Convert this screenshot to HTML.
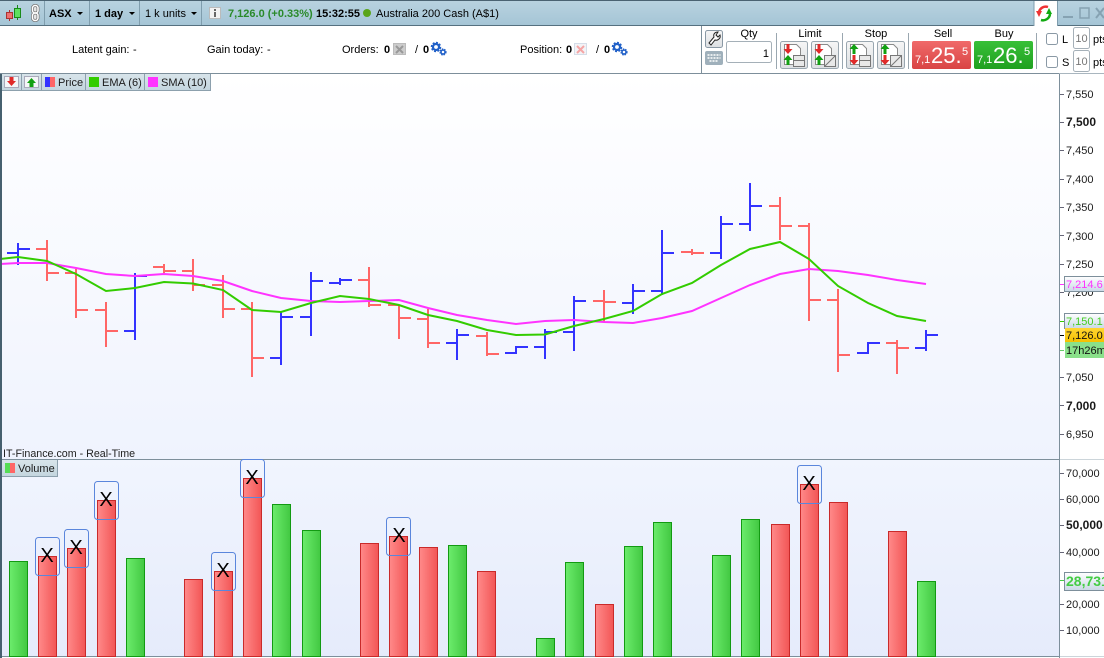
<!DOCTYPE html>
<html><head><meta charset="utf-8"><style>
html,body{margin:0;padding:0;background:#fff;width:1104px;height:658px;overflow:hidden}
svg{display:block;font-family:"Liberation Sans",sans-serif}
</style></head><body>
<svg width="1104" height="658" viewBox="0 0 1104 658" xmlns="http://www.w3.org/2000/svg" font-size="11" fill="#000">
<defs>
<linearGradient id="top" x1="0" y1="0" x2="0" y2="1"><stop offset="0" stop-color="#b9d3e0"/><stop offset="1" stop-color="#a5c5d6"/></linearGradient>
<linearGradient id="bgc" x1="0" y1="0" x2="0" y2="1"><stop offset="0" stop-color="#ffffff"/><stop offset="1" stop-color="#eff3fe"/></linearGradient>
<linearGradient id="bgv" x1="0" y1="0" x2="0" y2="1"><stop offset="0" stop-color="#f1f5fe"/><stop offset="1" stop-color="#e5ebfb"/></linearGradient>
<linearGradient id="rb" x1="0" y1="0" x2="1" y2="0"><stop offset="0" stop-color="#ff8a8a"/><stop offset="1" stop-color="#f25555"/></linearGradient>
<linearGradient id="gb" x1="0" y1="0" x2="1" y2="0"><stop offset="0" stop-color="#6cec6c"/><stop offset="1" stop-color="#42c842"/></linearGradient>
<linearGradient id="sell" x1="0" y1="0" x2="0" y2="1"><stop offset="0" stop-color="#f06a6a"/><stop offset="1" stop-color="#d94444"/></linearGradient>
<linearGradient id="buy" x1="0" y1="0" x2="0" y2="1"><stop offset="0" stop-color="#38c038"/><stop offset="1" stop-color="#20a020"/></linearGradient>
<linearGradient id="btn" x1="0" y1="0" x2="0" y2="1"><stop offset="0" stop-color="#f6f6f6"/><stop offset="1" stop-color="#dcdfe2"/></linearGradient>
<linearGradient id="lab" x1="0" y1="0" x2="0" y2="1"><stop offset="0" stop-color="#ffffff"/><stop offset="1" stop-color="#c9d8e6"/></linearGradient>
<linearGradient id="yel" x1="0" y1="0" x2="0" y2="1"><stop offset="0" stop-color="#ffd633"/><stop offset="1" stop-color="#f5c000"/></linearGradient>
<linearGradient id="leg" x1="0" y1="0" x2="0" y2="1"><stop offset="0" stop-color="#d8e4ea"/><stop offset="1" stop-color="#c4d6df"/></linearGradient>
</defs>

<!-- Chart backgrounds -->
<rect x="0" y="74" width="1059" height="385" fill="url(#bgc)"/>
<rect x="0" y="460" width="1059" height="197" fill="url(#bgv)"/>

<!-- Top bar -->
<rect x="0" y="0" width="1104" height="25" fill="url(#top)"/>
<rect x="0" y="0" width="1104" height="1" fill="#4a6372"/>
<rect x="0" y="25" width="1104" height="1" fill="#55707f"/>
<g fill="#7f9dad"><rect x="44" y="1" width="1" height="24"/><rect x="89" y="1" width="1" height="24"/><rect x="139" y="1" width="1" height="24"/><rect x="201" y="1" width="1" height="24"/></g>
<!-- candle icon -->
<g stroke="#a33" fill="#ee7070"><path d="M9.500 10V21" fill="none"/><rect x="6.500" y="12.500" width="6" height="6"/></g>
<g stroke="#1a8a1a" fill="#5fe05f"><path d="M17.500 5V20" fill="none"/><rect x="14.500" y="8.500" width="6" height="9"/></g>
<!-- chain icon -->
<g fill="#e6e6e6" stroke="#777" stroke-width="3"><rect x="32.500" y="5.500" width="5.500" height="7.500" rx="2.500"/><rect x="32.500" y="13" width="5.500" height="7.500" rx="2.500"/></g>
<g fill="none" stroke="#fff" stroke-width="1.500"><rect x="32.500" y="5.500" width="5.500" height="7.500" rx="2.500"/><rect x="32.500" y="13" width="5.500" height="7.500" rx="2.500"/></g>
<text x="49" y="17" font-weight="bold">ASX</text>
<path d="M77 12h6l-3 3z"/>
<text x="95" y="17" font-weight="bold">1 day</text>
<path d="M129 12h6l-3 3z"/>
<text x="145" y="17">1 k units</text>
<path d="M191 12h6l-3 3z"/>
<rect x="209.500" y="7.500" width="11" height="11" fill="#f2f2f2" stroke="#bbb"/>
<rect x="214" y="9" width="2" height="2" fill="#666"/><rect x="214" y="12" width="2" height="5" fill="#666"/>
<text x="228" y="17" font-weight="bold" fill="#2a8a2a">7,126.0 (+0.33%)</text>
<text x="316" y="17" font-weight="bold">15:32:55</text>
<circle cx="367" cy="13" r="4" fill="#5aa51a"/>
<text x="376" y="17">Australia 200 Cash (A$1)</text>
<!-- tab + window controls -->
<rect x="1034" y="1" width="24" height="25" fill="#fff"/>
<path d="M1034 1V26M1057.500 1V26" stroke="#7f9dad"/>
<path d="M1048 7a7 7 0 0 0-9 5" fill="none" stroke="#e33" stroke-width="2.500"/><path d="M1036 11l6 0-3 6z" fill="#e33"/>
<path d="M1041 20a7 7 0 0 0 9-6" fill="none" stroke="#1a1" stroke-width="2.500"/><path d="M1046 14l6 0-3-6z" fill="#1a1"/>
<rect x="1063" y="16" width="10" height="2" fill="#86a2b2"/>
<rect x="1080" y="8" width="9" height="10" fill="none" stroke="#86a2b2" stroke-width="1.500"/>
<path d="M1096 8l8 10M1104 8l-8 10" stroke="#86a2b2" stroke-width="2"/>

<!-- Info row -->
<rect x="0" y="73" width="1059" height="1" fill="#7d8f9b"/>
<rect x="1059" y="73" width="45" height="1" fill="#a9b6bf"/>
<text x="72" y="53">Latent gain:</text><text x="133" y="53">-</text>
<text x="207" y="53">Gain today:</text><text x="267" y="53">-</text>
<text x="342" y="53">Orders:</text><text x="384" y="53" font-weight="bold">0</text>
<rect x="393.500" y="43.500" width="12" height="11" fill="#ccc" stroke="#bbb"/><path d="M396 46l7 7M403 46l-7 7" stroke="#999" stroke-width="2"/>
<text x="415" y="53">/</text><text x="423" y="53" font-weight="bold">0</text>
<g fill="none" stroke="#2060c8">
<circle cx="436" cy="47" r="3" stroke-width="2.200"/><circle cx="436" cy="47" r="4.500" stroke-width="1.500" stroke-dasharray="2 1.500"/>
<circle cx="443" cy="52" r="2" stroke-width="1.500"/><circle cx="443" cy="52" r="3" stroke-width="1.200" stroke-dasharray="1.500 1"/>
</g>
<text x="520" y="53">Position:</text><text x="566" y="53" font-weight="bold">0</text>
<rect x="574.500" y="43.500" width="12" height="11" fill="#f3f3f6" stroke="#d5dde8"/><path d="M577 46l7 7M584 46l-7 7" stroke="#f5a5a5" stroke-width="2"/>
<text x="596" y="53">/</text><text x="604" y="53" font-weight="bold">0</text>
<g fill="none" stroke="#2060c8">
<circle cx="617" cy="47" r="3" stroke-width="2.200"/><circle cx="617" cy="47" r="4.500" stroke-width="1.500" stroke-dasharray="2 1.500"/>
<circle cx="624" cy="52" r="2" stroke-width="1.500"/><circle cx="624" cy="52" r="3" stroke-width="1.200" stroke-dasharray="1.500 1"/>
</g>

<!-- Trade panel -->
<rect x="701" y="26" width="1" height="47" fill="#7d8f9b"/>
<rect x="705.500" y="30.500" width="17" height="17" rx="2" fill="url(#btn)" stroke="#8a99a5"/>
<path d="M709 43l5-6c-1-3 1-5 4-5l-2 3 2 2 2-2c1 3-2 6-5 5l-4 5z" fill="#fff" stroke="#222" stroke-width="1"/>
<rect x="705" y="51" width="18" height="14" rx="2" fill="#9fb0bb"/>
<path d="M707.500 55h13M707.500 58h13M709.500 61h9" stroke="#fff" stroke-width="1.500" stroke-dasharray="2 1"/>
<text x="749" y="37" text-anchor="middle">Qty</text>
<rect x="726.500" y="41.500" width="45" height="21" rx="2" fill="#fff" stroke="#a5b0b8"/>
<text x="769" y="57" text-anchor="end">1</text>
<g fill="#9aa7b0"><rect x="776" y="33" width="1" height="36"/><rect x="842" y="33" width="1" height="36"/><rect x="908" y="33" width="1" height="36"/><rect x="1036" y="33" width="1" height="36"/></g>
<text x="810" y="37" text-anchor="middle">Limit</text>
<text x="876" y="37" text-anchor="middle">Stop</text>
<text x="943" y="37" text-anchor="middle">Sell</text>
<text x="1004" y="37" text-anchor="middle">Buy</text>

<g stroke="#9aa7b0" fill="url(#btn)"><rect x="780.500" y="41.500" width="27" height="27" rx="2"/><rect x="811.500" y="41.500" width="27" height="27" rx="2"/><rect x="846.500" y="41.500" width="27" height="27" rx="2"/><rect x="877.500" y="41.500" width="27" height="27" rx="2"/></g>
<!-- order icons: docs -->
<g fill="#fff" stroke="#8a8a8a"><path d="M784.500 44.500h12l4 4v16h-16z"/><path d="M815.500 44.500h12l4 4v16h-16z"/><path d="M850.500 44.500h12l4 4v16h-16z"/><path d="M881.500 44.500h12l4 4v16h-16z"/></g>
<g fill="#e8e8e8" stroke="#777"><rect x="793.500" y="55.500" width="11" height="11"/><rect x="824.500" y="55.500" width="11" height="11"/><rect x="859.500" y="55.500" width="11" height="11"/><rect x="890.500" y="55.500" width="11" height="11"/></g>
<path d="M793.500 60.500h11M859.500 60.500h11M825 66l10-10M891 66l10-10" stroke="#777" fill="none"/>
<g fill="#e02a2a"><path d="M786.500 44h3v5h3l-4.500 5-4.500-5h3z"/><path d="M817.500 44h3v5h3l-4.500 5-4.500-5h3z"/><path d="M852.500 55h3v5h3l-4.500 5-4.500-5h3z"/><path d="M883.500 55h3v5h3l-4.500 5-4.500-5h3z"/></g>
<g fill="#12a012"><path d="M786.500 65v-5h-3l4.500-5 4.500 5h-3v5z"/><path d="M817.500 65v-5h-3l4.500-5 4.500 5h-3v5z"/><path d="M852.500 54v-5h-3l4.500-5 4.500 5h-3v5z"/><path d="M883.500 54v-5h-3l4.500-5 4.500 5h-3v5z"/></g>

<rect x="912" y="41" width="59" height="28" rx="2" fill="url(#sell)"/>
<rect x="974" y="41" width="59" height="28" rx="2" fill="url(#buy)"/>
<g fill="#fff">
<text x="915" y="63" font-size="11">7,1</text><text x="931" y="63" font-size="22">25.</text><text x="962" y="55" font-size="11">5</text>
<text x="977" y="63" font-size="11">7,1</text><text x="993" y="63" font-size="22">26.</text><text x="1024" y="55" font-size="11">5</text>
</g>
<rect x="1046.500" y="33.500" width="11" height="11" rx="2" fill="#fff" stroke="#8a99a5"/>
<rect x="1046.500" y="56.500" width="11" height="11" rx="2" fill="#fff" stroke="#8a99a5"/>
<text x="1062" y="43">L</text><text x="1062" y="66">S</text>
<rect x="1073.500" y="27.500" width="16" height="21" rx="2" fill="#fff" stroke="#a5b0b8"/>
<rect x="1073.500" y="50.500" width="16" height="21" rx="2" fill="#fff" stroke="#a5b0b8"/>
<text x="1081.500" y="42" text-anchor="middle" fill="#777">10</text><text x="1081.500" y="65" text-anchor="middle" fill="#777">10</text>
<text x="1093" y="43">pts</text><text x="1093" y="66">pts</text>

<!-- Legend -->
<rect x="1" y="74" width="209" height="16" fill="url(#leg)"/>
<path d="M1.500 74V90.500H210.500V74" fill="none" stroke="#8ca0ad"/>
<path d="M21.500 74V90M41.500 74V90M85.500 74V90M144.500 74V90" stroke="#8ca0ad"/>
<rect x="4.500" y="76.500" width="14" height="11" fill="#f4f6f8" stroke="#aab"/><path d="M9.500 77h4v4h2.500l-4.500 5-4.500-5h2.500z" fill="#e02a2a"/>
<rect x="24.500" y="76.500" width="14" height="11" fill="#f4f6f8" stroke="#aab"/><path d="M29.500 87v-4h-2.500l4.500-5 4.500 5h-2.500v4z" fill="#12a012"/>
<rect x="45" y="77" width="5" height="10" fill="#3333ff"/><rect x="50" y="77" width="5" height="10" fill="#ff6666"/>
<text x="58" y="86" fill="#1a1a1a">Price</text>
<rect x="89" y="77" width="10" height="10" fill="#33cc00"/>
<text x="102" y="86" fill="#1a1a1a">EMA (6)</text>
<rect x="148" y="77" width="10" height="10" fill="#ff33ff"/>
<text x="161" y="86" fill="#1a1a1a">SMA (10)</text>

<!-- OHLC -->
<g fill="none" stroke-width="2">
<path stroke="#3333ff" d="M18 243V265M7 253H18M18 249H30
M135 273V340M124 331H135M135 276H147
M281 312V365M270 358H281M281 317H293
M311 272V336M300 317H311M311 281H323
M340 278V285M329 283H340M340 280H352
M457 329V360M446 343H457M457 335H469
M516 346V354M505 353H516M516 347H528
M545 329V359M534 347H545M545 332H557
M574 296V351M563 332H574M574 301H586
M633 284V314M622 303H633M633 291H645
M662 230V295M651 291H662M662 253H674
M721 216V259M710 253H721M721 224H733
M750 183V231M739 224H750M750 206H762
M868 342V354M857 353H868M868 343H880
M926 330V351M915 348H926M926 335H938"/>
<path stroke="#ff6666" d="M47 240V281M36 249H47M47 273H59
M76 269V318M65 273H76M76 310H88
M106 302V347M95 310H106M106 331H118
M164 264V273M153 267H164M164 271H176
M193 259V291M182 271H193M193 285H205
M223 275V318M212 285H223M223 309H235
M252 302V377M241 309H252M252 358H264
M369 267V307M358 280H369M369 305H381
M399 305V339M388 305H399M399 318H411
M428 309V348M417 319H428M428 343H440
M487 332V356M476 336H487M487 354H499
M604 290V322M593 301H604M604 302H616
M692 249V255M681 252H692M692 253H704
M780 197V240M769 206H780M780 226H792
M809 223V321M798 226H809M809 300H821
M838 289V372M827 300H838M838 355H850
M897 340V374M886 343H897M897 348H909"/>
</g>
<polyline fill="none" stroke="#ff33ff" stroke-width="2" points="0,264 18,263 47,263 76,268 106,274 135,276 164,274 193,276 223,281 252,291 281,298 311,301 340,302 369,301 399,300 428,308 457,315 487,320 516,324 545,321 574,320 604,322 633,323 662,318 692,311 721,298 750,285 780,274 809,269 838,271 868,275 897,280 926,284"/>
<polyline fill="none" stroke="#33cc00" stroke-width="2" points="0,259 18,257 47,261 76,274 106,291 135,288 164,282 193,283.500 223,290 252,310 281,312 311,303 340,296 369,299 399,305 428,315 457,321 487,330 516,335 545,334.500 574,326 604,319 633,311 662,294 692,283 721,265 750,249 780,242 809,259 838,286 868,303 897,316 926,321"/>

<text x="3" y="457" font-size="10.700" fill="#222">IT-Finance.com - Real-Time</text>

<!-- Separator -->
<rect x="0" y="459" width="1059" height="1" fill="#7d8f9b"/>
<rect x="1060" y="459" width="44" height="1" fill="#ccd5da"/>
<rect x="0" y="656" width="1059" height="1" fill="#7d8f9b"/>
<rect x="1060" y="656" width="44" height="1" fill="#ccd5da"/>
<rect x="0" y="74" width="2" height="584" fill="#46606f"/>

<!-- Volume legend -->
<rect x="2" y="460" width="55" height="16" fill="url(#leg)"/>
<path d="M2 476.500H57.500V460" fill="none" stroke="#8ca0ad"/>
<rect x="5" y="463" width="5" height="10" fill="#55dd55"/><rect x="10" y="463" width="5" height="10" fill="#ff6666"/>
<text x="18" y="472" fill="#1a1a1a">Volume</text>

<!-- Volume bars -->
<g fill="url(#gb)" stroke="#129a12">
<rect x="9.500" y="561.500" width="18" height="95"/>
<rect x="126.500" y="558.500" width="18" height="98"/>
<rect x="272.500" y="504.500" width="18" height="152"/>
<rect x="302.500" y="530.500" width="18" height="126"/>
<rect x="448.500" y="545.500" width="18" height="111"/>
<rect x="536.500" y="638.500" width="18" height="18"/>
<rect x="565.500" y="562.500" width="18" height="94"/>
<rect x="624.500" y="546.500" width="18" height="110"/>
<rect x="653.500" y="522.500" width="18" height="134"/>
<rect x="712.500" y="555.500" width="18" height="101"/>
<rect x="741.500" y="519.500" width="18" height="137"/>
<rect x="917.500" y="581.500" width="18" height="75"/>
</g>
<g fill="url(#rb)" stroke="#c92a2a">
<rect x="38.500" y="556.500" width="18" height="100"/>
<rect x="67.500" y="548.500" width="18" height="108"/>
<rect x="97.500" y="500.500" width="18" height="156"/>
<rect x="184.500" y="579.500" width="18" height="77"/>
<rect x="214.500" y="571.500" width="18" height="85"/>
<rect x="243.500" y="478.500" width="18" height="178"/>
<rect x="360.500" y="543.500" width="18" height="113"/>
<rect x="389.500" y="536.500" width="18" height="120"/>
<rect x="419.500" y="547.500" width="18" height="109"/>
<rect x="477.500" y="571.500" width="18" height="85"/>
<rect x="595.500" y="604.500" width="18" height="52"/>
<rect x="771.500" y="524.500" width="18" height="132"/>
<rect x="800.500" y="484.500" width="18" height="172"/>
<rect x="829.500" y="502.500" width="18" height="154"/>
<rect x="888.500" y="531.500" width="18" height="125"/>
</g>
<g fill="none" stroke="#5a86dc">
<rect x="35.500" y="537.500" width="24" height="38" rx="3"/>
<rect x="64.500" y="529.500" width="24" height="38" rx="3"/>
<rect x="94.500" y="481.500" width="24" height="38" rx="3"/>
<rect x="211.500" y="552.500" width="24" height="38" rx="3"/>
<rect x="240.500" y="459.500" width="24" height="38" rx="3"/>
<rect x="386.500" y="517.500" width="24" height="38" rx="3"/>
<rect x="797.500" y="465.500" width="24" height="38" rx="3"/>
</g>
<g font-size="20" text-anchor="middle">
<text x="47" y="562">X</text><text x="76" y="554">X</text><text x="106" y="506">X</text><text x="223" y="577">X</text><text x="252" y="484">X</text><text x="399" y="542">X</text><text x="809" y="490">X</text>
</g>

<!-- Axis -->
<rect x="1059" y="74" width="1" height="584" fill="#7d8f9b"/>
<path d="M1060 94.500h4M1060 122.500h4M1060 150.500h4M1060 179.500h4M1060 207.500h4M1060 235.500h4M1060 264.500h4M1060 292.500h4M1060 377.500h4M1060 405.500h4M1060 434.500h4M1060 473.500h4M1060 499.500h4M1060 525.500h4M1060 552.500h4M1060 604.500h4M1060 630.500h4" stroke="#667"/>
<g fill="#1a1a1a">
<text x="1066" y="98">7,550</text>
<text x="1066" y="126" font-size="12" font-weight="bold">7,500</text>
<text x="1066" y="154">7,450</text>
<text x="1066" y="183">7,400</text>
<text x="1066" y="211">7,350</text>
<text x="1066" y="240">7,300</text>
<text x="1066" y="268">7,250</text>
<text x="1066" y="296">7,200</text>
<text x="1066" y="381">7,050</text>
<text x="1066" y="410" font-size="12" font-weight="bold">7,000</text>
<text x="1066" y="438">6,950</text>
<text x="1066" y="477">70,000</text>
<text x="1066" y="503">60,000</text>
<text x="1066" y="529" font-size="12" font-weight="bold">50,000</text>
<text x="1066" y="556">40,000</text>
<text x="1066" y="608">20,000</text>
<text x="1066" y="634">10,000</text>
</g>
<path d="M1060 284.500h4" stroke="#ff33ff"/>
<path d="M1060 321.500h4" stroke="#33cc00"/>
<path d="M1060 335.500h4" stroke="#000"/>
<path d="M1060 350.500h4" stroke="#66cc66"/>
<path d="M1060 580.500h4" stroke="#44cc44"/>
<rect x="1064.500" y="276.500" width="43" height="15" fill="url(#lab)" stroke="#7d8f9b"/>
<text x="1066" y="288" fill="#ff33ff">7,214.6</text>
<rect x="1064.500" y="313.500" width="43" height="15" fill="url(#lab)" stroke="#7d8f9b"/>
<text x="1066" y="325" fill="#44cc22">7,150.1</text>
<rect x="1065" y="328" width="39" height="14" fill="url(#yel)"/>
<text x="1066" y="339" fill="#111">7,126.0</text>
<rect x="1065" y="342" width="39" height="16" fill="#8ae08a"/>
<text x="1066" y="354" fill="#111">17h26m</text>
<rect x="1064.500" y="572.500" width="43" height="18" fill="url(#lab)" stroke="#7d8f9b"/>
<text x="1066" y="586" font-size="14" font-weight="bold" fill="#44cc44">28,731</text>
</svg>
</body></html>
